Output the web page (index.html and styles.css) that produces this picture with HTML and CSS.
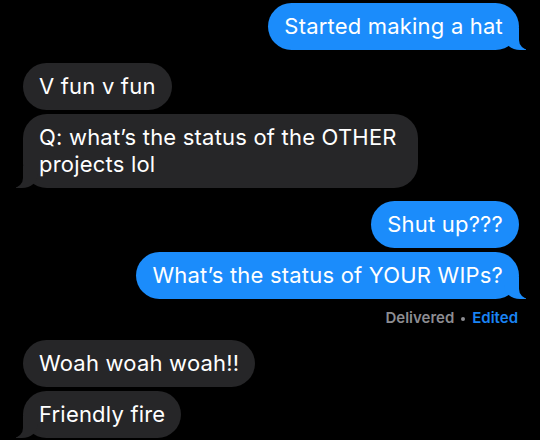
FILE: index.html
```html
<!DOCTYPE html>
<html lang="en">
<head>
  <meta charset="UTF-8">
  <meta name="viewport" content="width=device-width, initial-scale=1.0">
  <title>Messages</title>
  <link rel="stylesheet" href="styles.css">
</head>
<body>
  <div class="thread">
    <div class="group sent">
      <p class="bubble tail">Started making a hat</p>
    </div>

    <div class="group received">
      <p class="bubble">V fun v fun</p>
      <p class="bubble tail">Q: what’s the status of the OTHER projects lol</p>
    </div>

    <div class="group sent">
      <p class="bubble">Shut up???</p>
      <p class="bubble tail">What’s the status of YOUR WIPs?</p>
      <p class="receipt">Delivered<span class="dot"></span><span class="edited">Edited</span></p>
    </div>

    <div class="group received">
      <p class="bubble">Woah woah woah!!</p>
      <p class="bubble tail">Friendly fire</p>
    </div>
  </div>
</body>
</html>
```

FILE: styles.css
```css
:root {
  --bg: #000000;
  --blue: #1b8cfb;
  --grey: #262628;
  --text: #ffffff;
  --muted: #8d8d92;
  --link: #1a84f5;
}

* {
  margin: 0;
  padding: 0;
  box-sizing: border-box;
}

body {
  font-family: Inter, "Noto Sans", "Liberation Sans", sans-serif;
  background-color: var(--bg);
  color: var(--text);
  width: 540px;
  height: 440px;
  overflow: hidden;
}

.thread {
  display: flex;
  flex-direction: column;
  gap: 13px;
  padding: 3px 21px 0 23px;
}

.group {
  display: flex;
  flex-direction: column;
  gap: 4px;
}

.group.sent {
  align-items: flex-end;
}

.group.received {
  align-items: flex-start;
}

.bubble {
  position: relative;
  max-width: 395px;
  padding: 10px 16px;
  border-radius: 24px;
  font-size: 22px;
  line-height: 27px;
  letter-spacing: 0.2px;
}

.sent .bubble {
  background-color: var(--blue);
}

.received .bubble {
  background-color: var(--grey);
}

/* tails */
.bubble.tail::before,
.bubble.tail::after {
  content: "";
  position: absolute;
  bottom: 0;
  height: 22px;
}

.sent .bubble.tail::before {
  right: -7px;
  width: 22px;
  background-color: var(--blue);
  border-bottom-left-radius: 16px 14px;
}

.sent .bubble.tail::after {
  right: -26px;
  width: 26px;
  background-color: var(--bg);
  border-bottom-left-radius: 10px;
}

.received .bubble.tail::before {
  left: -7px;
  width: 22px;
  background-color: var(--grey);
  border-bottom-right-radius: 16px 14px;
}

.received .bubble.tail::after {
  left: -26px;
  width: 26px;
  background-color: var(--bg);
  border-bottom-right-radius: 10px;
}

.receipt {
  display: flex;
  align-items: center;
  margin: 6px 1px 0 0;
  font-size: 15px;
  line-height: 18px;
  font-weight: 600;
  color: var(--muted);
}

.receipt .dot {
  width: 4px;
  height: 4px;
  margin: 1px 7px 0;
  border-radius: 50%;
  background-color: var(--muted);
}

.receipt .edited {
  color: var(--link);
}
```
